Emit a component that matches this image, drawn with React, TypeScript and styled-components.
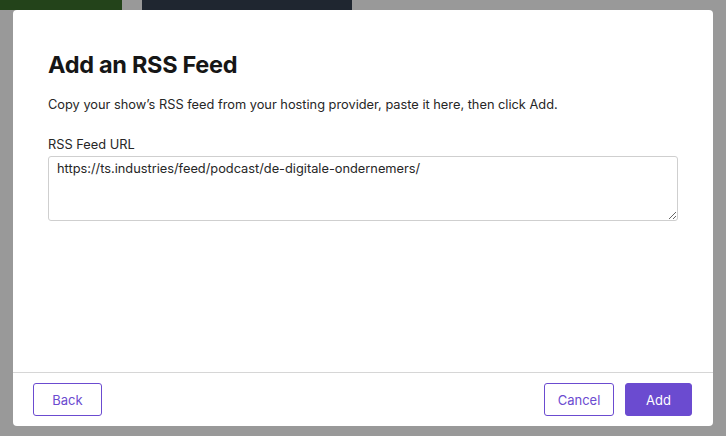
import React, { useState } from 'react';
import styled, { createGlobalStyle } from 'styled-components';

const GlobalStyle = createGlobalStyle`
    html, body {
        margin: 0;
        padding: 0;
        width: 100%;
        height: 100%;
        background: #999999;
        font-family: Inter, "Liberation Sans", Arial, sans-serif;
        -webkit-font-smoothing: antialiased;
    }
    #root {
        height: 100%;
    }
    * {
        box-sizing: border-box;
    }
`;

const App: React.FC = () => {
    const [url, setUrl] = useState('https://ts.industries/feed/podcast/de-digitale-ondernemers/');

    return (
        <>
            <GlobalStyle />
            <Page>
                <PageBar>
                    <PageBlock width='122px' color='#23431a' />
                    <PageBlock width='210px' color='#1f2630' />
                </PageBar>
                <Dialog>
                    <Body>
                        <Title>Add an RSS Feed</Title>
                        <Intro>Copy your show’s RSS feed from your hosting provider, paste it here, then click Add.</Intro>
                        <Field>
                            <Label htmlFor='rss-url'>RSS Feed URL</Label>
                            <UrlInput id='rss-url' value={url} onChange={(e) => setUrl(e.target.value)} />
                        </Field>
                    </Body>
                    <Footer>
                        <Button variant='outline' width='69px'>Back</Button>
                        <Actions>
                            <Button variant='outline' width='70px'>Cancel</Button>
                            <Button variant='solid' width='67px'>Add</Button>
                        </Actions>
                    </Footer>
                </Dialog>
            </Page>
        </>
    );
};

const Page = styled.div`
    position: relative;
    width: 100%;
    height: 100%;
    overflow: hidden;
`;

const PageBar = styled.div`
    display: flex;
    gap: 20px;
    height: 10px;
`;

const PageBlock = styled.div<{ width: string; color: string }>`
    width: ${({ width }) => width};
    background: ${({ color }) => color};
`;

const Dialog = styled.div`
    position: absolute;
    left: 13px;
    top: 10px;
    width: 700px;
    height: 416px;
    background: #ffffff;
    border-radius: 4px;
    display: flex;
    flex-direction: column;
`;

const Body = styled.div`
    flex: 1;
    padding: 40px 35px 0 35px;
`;

const Title = styled.h2`
    margin: 0;
    font-size: 23.5px;
    font-weight: 700;
    line-height: 30px;
    color: #161616;
    letter-spacing: -0.3px;
`;

const Intro = styled.p`
    margin: 16px 0 0;
    font-size: 12.8px;
    line-height: 18px;
    color: #262626;
`;

const Field = styled.div`
    margin-top: 22px;
    display: flex;
    flex-direction: column;
`;

const Label = styled.label`
    font-size: 12.8px;
    line-height: 18px;
    color: #262626;
    margin-bottom: 2px;
`;

const UrlInput = styled.textarea`
    width: 630px;
    height: 65px;
    border: 1px solid #cfcfcf;
    border-radius: 3px;
    padding: 4px 8px;
    font-family: inherit;
    font-size: 12.8px;
    line-height: 16px;
    color: #262626;
    resize: vertical;
    outline: none;
`;

const Footer = styled.div`
    height: 54px;
    border-top: 1px solid #d6d6d6;
    display: flex;
    align-items: center;
    justify-content: space-between;
    padding: 0 21px 0 20px;
`;

const Actions = styled.div`
    display: flex;
    gap: 11px;
`;

const Button = styled.button<{ variant: 'outline' | 'solid'; width: string }>`
    width: ${({ width }) => width};
    height: 33px;
    padding: 0;
    border-radius: 3px;
    font-family: inherit;
    font-size: 13px;
    cursor: pointer;
    border: 1px solid #6b4bd0;
    color: ${({ variant }) => (variant === 'solid' ? '#ffffff' : '#6b4bd0')};
    background: ${({ variant }) => (variant === 'solid' ? '#6b4bd0' : '#ffffff')};
`;

export default App;
